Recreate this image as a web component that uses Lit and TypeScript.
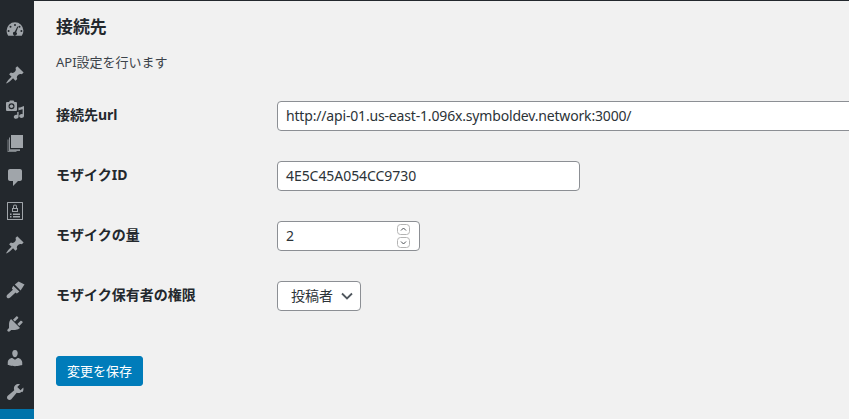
import { LitElement, html, css, svg } from "lit";
import { customElement } from "lit/decorators.js";

const pin = svg`<path d="M10.44 3.02l1.82-1.82 6.36 6.35-1.83 1.82c-1.05-.68-2.48-.57-3.41.36l-.75.75c-.92.93-1.04 2.35-.35 3.41l-1.83 1.82-2.41-2.41-2.8 2.79c-.42.42-3.38 2.71-3.8 2.29s1.86-3.39 2.28-3.81l2.79-2.79L4.1 9.36l1.83-1.82c1.05.69 2.48.57 3.4-.36l.75-.75c.93-.92 1.05-2.35.36-3.41z"/>`;
const icons = {
  dash: svg`<path fill-rule="evenodd" d="M10 3.200a8.400 8.400 0 0 0-8.400 8.400c0 1.900.6 3.600 1.600 5.200h13.600a8.400 8.400 0 0 0 1.600-5.200A8.400 8.400 0 0 0 10 3.200zM10 5a1 1 0 1 1 0 2 1 1 0 0 1 0-2zM5.500 6.800a1 1 0 1 1 0 2 1 1 0 0 1 0-2zM14.500 6.800a1 1 0 1 1 0 2 1 1 0 0 1 0-2zM3.600 11a1 1 0 1 1 0 2 1 1 0 0 1 0-2zM16.400 11a1 1 0 1 1 0 2 1 1 0 0 1 0-2zM12.400 7.400l.9.4-2.100 5.400a1.900 1.900 0 1 1-1.500-.5z"/>`,
  pin,
  media: svg`<path fill-rule="evenodd" d="M4 3l1-1.500h3.500L9.500 3h1.200C11.500 3 12 3.500 12 4.300v6.400c0 .8-.5 1.300-1.300 1.300H2.300C1.500 12 1 11.500 1 10.700V4.300C1 3.500 1.500 3 2.300 3zM6.500 4.300a3 3 0 1 0 0 6 3 3 0 0 0 0-6z"/><circle cx="6.500" cy="7.300" r="1.700"/><path d="M19 7v9.700c0 1.300-1.200 2.300-2.600 2.300-1.300 0-2.200-.8-2.200-1.900s1.100-2.100 2.400-2.100c.4 0 .7.100 1 .2v-4.900l-4 1v6.200c0 1.300-1.200 2.300-2.600 2.300-1.300 0-2.200-.8-2.200-1.900s1.100-2.100 2.400-2.100c.4 0 .7.100 1 .2V13h1.300V8.600h1.500z"/>`,
  pages: svg`<path d="M6 15V2h12v13H6z"/><path d="M4 4.500h1v11.800h10V18H4z" opacity=".85"/><path d="M2.500 6.500h1v11.500h8v1H2.500z" opacity=".7"/>`,
  comment: svg`<path d="M5 2h10c1.100 0 2 .9 2 2v8c0 1.100-.9 2-2 2h-2l-5 5v-5H5c-1.100 0-2-.9-2-2V4c0-1.100.9-2 2-2z"/>`,
  form: svg`<path fill-rule="evenodd" d="M2.500 1h15c.3 0 .5.200.5.500v17c0 .3-.2.500-.5.500h-15a.5.500 0 0 1-.5-.500v-17c0-.3.200-.5.500-.5zM3 2v16h14V2z"/><path fill-rule="evenodd" d="M10 3.500a2 2 0 0 1 2 2V7h1v4H7V7h1V5.500a2 2 0 0 1 2-2zM10 4.500a1 1 0 0 0-1 1V7h2V5.500a1 1 0 0 0-1-1zM8 8v2h4V8z"/><path d="M5 12.500h1.500V14H5zM8 12.500h7V14H8zM5 15h1.500v1.500H5zM8 15h7v1.500H8z"/>`,
  brush: svg`<path d="M9.800 4.600L13.600 1.500l5.900 3-3.900 6z"/><path d="M8.200 5.800l6.200 5.600-1.800 1.700c-.5.400-1.100.4-1.500 0l-.5-.5-5.400 5c-1 .9-2.300.9-3.100.1s-.7-2 .2-2.900l5.600-5-.7-.7c-.4-.4-.4-1 0-1.400z"/>`,
  plugin: svg`<path d="M13.110 4.360L9.870 7.600 8 5.730l3.240-3.240c.35-.34 1.050-.2 1.560.32.520.51.660 1.210.310 1.550zm-8 1.770l.910-1.120 9.010 9.010-1.190.84c-.71.710-2.630 1.160-3.820 1.160H6.140L4.900 17.260c-.59.590-1.540.590-2.120 0-.59-.58-.59-1.530 0-2.120l1.240-1.240v-3.880c0-1.130.46-3.050 1.090-3.890zm7.260 3.970l3.240-3.240c.34-.35 1.040-.21 1.550.31.520.51.660 1.210.31 1.550l-3.240 3.250z"/>`,
  user: svg`<path d="M10 9.250c-2.270 0-2.730-3.440-2.730-3.440C7 4.020 7.820 2 9.970 2c2.160 0 2.980 2.020 2.710 3.810 0 0-.41 3.440-2.680 3.440zm0 2.570L12.720 10c2.390 0 4.520 2.330 4.520 4.530v2.490s-3.650 1.130-7.240 1.130c-3.650 0-7.240-1.130-7.240-1.130v-2.490c0-2.250 1.940-4.480 4.470-4.480z"/>`,
  wrench: svg`<path d="M16.680 9.770c-1.340 1.340-3.300 1.670-4.950.99l-5.410 6.520c-.99.990-2.590.99-3.570 0-.99-.98-.99-2.580 0-3.570l6.520-5.420c-.68-1.650-.35-3.610.99-4.950 1.280-1.280 3.120-1.620 4.710-1.060l-2.690 2.690 3.270 3.270 2.700-2.690c.550 1.590.220 3.430-1.060 4.710zM4.940 15.910c0 .55-.45 1-1 1s-1-.450-1-1 .45-1 1-1 1 .45 1 1z"/>`,
};

@customElement("app-root")
export class AppRoot extends LitElement {
  static styles = css`
    :host {
      display: flex;
      width: 849px;
      height: 419px;
      overflow: hidden;
      background: #f1f1f1;
      color: #3c434a;
      font-family: "Noto Sans", "Noto Sans CJK JP", sans-serif;
      font-size: 13px;
    }
    .side {
      flex: none;
      width: 34px;
      height: 419px;
      background: #23282d;
      display: flex;
      flex-direction: column;
      padding-top: 12px;
      box-sizing: border-box;
    }
    .item {
      flex: none;
      height: 34px;
      display: flex;
      align-items: center;
      justify-content: center;
      padding-right: 4px;
      box-sizing: border-box;
    }
    .item svg {
      width: 20px;
      height: 20px;
      fill: #a0a5aa;
    }
    .gap1 { margin-top: 12px; }
    .gap2 { margin-top: 11px; }
    .current {
      flex: none;
      height: 34px;
      background: #0073aa;
    }
    .main {
      flex: 1;
      min-width: 0;
      border-top: 1px solid #23282d;
      padding: 14px 0 0 22px;
      box-sizing: border-box;
      height: 419px;
    }
    h1 {
      margin: 0;
      font-size: 16.900px;
      line-height: 24px;
      font-weight: 700;
      color: #23282d;
    }
    .desc {
      margin: 14px 0 0;
      font-size: 13px;
      line-height: 19px;
    }
    .rows {
      margin-top: 29px;
      display: flex;
      flex-direction: column;
      gap: 30px;
    }
    .row {
      display: flex;
      height: 30px;
    }
    .lbl {
      flex: none;
      width: 221px;
      font-weight: 700;
      font-size: 14px;
      line-height: 28px;
      color: #23282d;
    }
    .field {
      box-sizing: border-box;
      height: 30px;
      background: #fff;
      border: 1px solid #8c8f94;
      border-radius: 4px;
      font-size: 14px;
      line-height: 28px;
      color: #2c3338;
      padding: 0 8px;
      white-space: nowrap;
      flex: none;
    }
    .url { width: 600px; letter-spacing: -0.17px; }
    .id { width: 303px; letter-spacing: -0.06px; }
    .num {
      width: 143px;
      display: flex;
      justify-content: space-between;
      align-items: center;
      padding-right: 9px;
    }
    .spin {
      display: flex;
      flex-direction: column;
      gap: 2px;
    }
    .spin svg {
      display: block;
      width: 13px;
      height: 11px;
      fill: none;
      stroke: #4d5156;
    }
    .spin rect { stroke: #b4b4b4; }
    .sel {
      width: 84px;
      display: flex;
      align-items: center;
      justify-content: space-between;
      padding: 0 7px 0 13px;
    }
    .sel svg {
      width: 12px;
      height: 12px;
      fill: none;
      stroke: #50575e;
      stroke-width: 1.800;
    }
    .save {
      display: block;
      margin-top: 45px;
      width: 87px;
      height: 30px;
      box-sizing: border-box;
      padding: 0;
      background: #007cba;
      border: 1px solid #007cba;
      border-radius: 3px;
      color: #fff;
      font: inherit;
      font-size: 13px;
      line-height: 28px;
      text-align: center;
    }
  `;

  private ic(name: keyof typeof icons, cls = "") {
    return html`<div class="item ${cls}"><svg viewBox="0 0 20 20">${icons[name]}</svg></div>`;
  }

  render() {
    return html`
      <nav class="side">
        ${this.ic("dash")}
        ${this.ic("pin", "gap1")}
        ${this.ic("media")}
        ${this.ic("pages")}
        ${this.ic("comment")}
        ${this.ic("form")}
        ${this.ic("pin")}
        ${this.ic("brush", "gap2")}
        ${this.ic("plugin")}
        ${this.ic("user")}
        ${this.ic("wrench")}
        <div class="current"></div>
      </nav>
      <main class="main">
        <h1>接続先</h1>
        <p class="desc">API設定を行います</p>
        <div class="rows">
          <div class="row">
            <div class="lbl">接続先url</div>
            <div class="field url">http://api-01.us-east-1.096x.symboldev.network:3000/</div>
          </div>
          <div class="row">
            <div class="lbl">モザイクID</div>
            <div class="field id">4E5C45A054CC9730</div>
          </div>
          <div class="row">
            <div class="lbl">モザイクの量</div>
            <div class="field num">
              <span>2</span>
              <span class="spin">
                <svg viewBox="0 0 13 11"><rect x=".5" y=".5" width="12" height="10" rx="3"></rect><path d="M4 6.500l2.500-2.500L9 6.500"></path></svg>
                <svg viewBox="0 0 13 11"><rect x=".5" y=".5" width="12" height="10" rx="3"></rect><path d="M4 4.500L6.500 7 9 4.500"></path></svg>
              </span>
            </div>
          </div>
          <div class="row">
            <div class="lbl">モザイク保有者の権限</div>
            <div class="field sel">
              <span>投稿者</span>
              <svg viewBox="0 0 12 12"><path d="M1 3.500l5 5 5-5"></path></svg>
            </div>
          </div>
        </div>
        <button class="save">変更を保存</button>
      </main>
    `;
  }
}
